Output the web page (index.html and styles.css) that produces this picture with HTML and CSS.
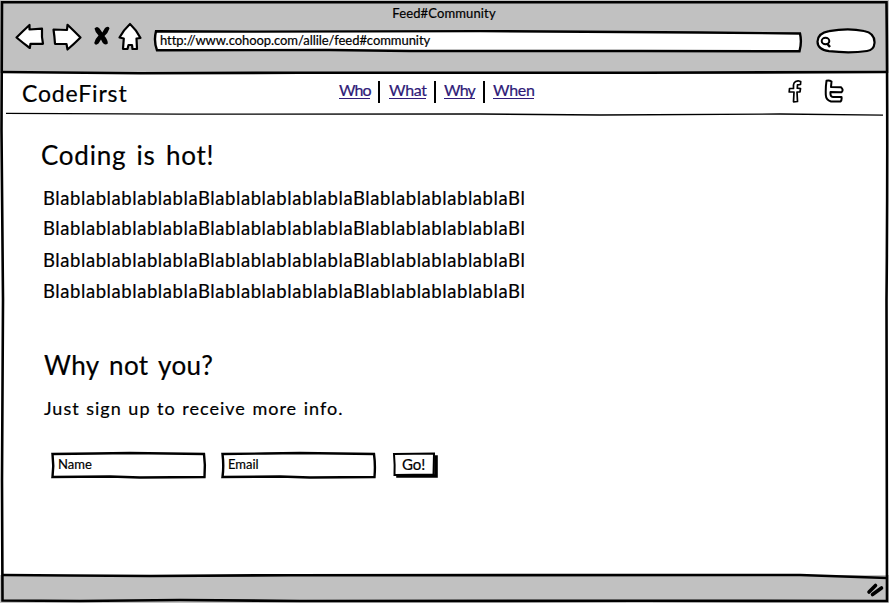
FILE: index.html
```html
<!DOCTYPE html>
<html lang="en">
<head>
<meta charset="utf-8">
<title>Feed#Community</title>
<link rel="stylesheet" href="styles.css">
</head>
<body>
<div class="window">
  <header class="chrome">
    <div class="title"><span>Feed#Community</span></div>
    <div class="toolbar">
      <svg class="controls" width="130" height="32" viewBox="14 22 130 32">
        <g fill="#fff" stroke="#000" stroke-width="2.2" stroke-linejoin="round">
          <path d="M16.5 37.5 Q23 31 29.5 25 L29.5 29.500 L42 28.700 Q41.500 37 43 43.800 L30.500 43.800 L29.800 48 Q23 43 16.500 37.500Z"/>
          <path d="M53.500 29.500 L67 30 L67.500 24.800 Q74 31 80.500 37.500 Q74 44 67.500 49.500 L66.500 44 L55 43.800 Q54.500 36 53.500 29.500Z"/>
          <path d="M130 24 Q124 29.500 119.500 37.500 L123.800 38.500 L123 48.800 L127.500 49 L128.500 45 L132 45 L132.500 49 L137 49 L136.500 38.500 L140.500 38 Q136.500 30 130 24Z"/>
        </g>
        <path d="M94.500 28.500 Q97 25.500 99.500 28.500 L102.300 32.500 L105 28 Q109 25.500 109.500 28.500 Q108 33 104.500 36 Q108 40 107.800 43.500 Q105 46 102.500 42.500 L101 39.500 L98.500 43.500 Q95.500 46 94.200 43 Q95 39 98.500 35.500 Q95 32 94.500 28.500Z"/>
      </svg>
      <div class="address">
        <svg class="sketch" width="650" height="24" viewBox="153 29 650 24"><path d="M156 31.300 L250 31.600 L480 31.100 L700 32.500 L800 33.500 Q802 42 799.500 51.300 L640 51 L410 51 L330 50 L157 50.200 Q153.500 41 156 31.300Z"/></svg>
        <span>http://www.cohoop.com/allile/feed#community</span>
      </div>
      <svg class="search" width="62" height="28" viewBox="815 27 62 28">
        <path d="M829 51.200 Q817.500 49.500 817.500 41.500 Q818 33 829 31.200 Q848 27.500 864 31 Q875 33 874.500 43 Q874 50 867 51 Q850 53.500 829 51.200Z" fill="#fff" stroke="#000" stroke-width="2.200"/>
        <ellipse cx="825.500" cy="41" rx="3.800" ry="3.200" fill="none" stroke="#000" stroke-width="2"/>
        <path d="M827 43.500 L830 47" stroke="#000" stroke-width="2.500"/>
      </svg>
    </div>
  </header>

  <div class="sitebar">
    <div class="brand"><span>CodeFirst</span></div>
    <nav class="nav">
      <a class="who" href="#">Who</a><a class="what" href="#">What</a><a class="why" href="#">Why</a><a class="when" href="#">When</a>
    </nav>
    <div class="social">
      <svg width="14" height="25" viewBox="788 79 14 25" fill="#fff" stroke="#000" stroke-width="1.700" stroke-linejoin="round"><path d="M793.500 101.800 L794 92 L789.200 92 L789.500 88.500 L793.500 88.500 Q792.500 81 798 80.800 L800.700 81.500 L800.500 84.500 L797.500 84.800 L797.300 88.200 L800.500 88.500 L800 91.800 L797 92 L797.500 101.500Z"/></svg>
      <svg width="22" height="25" viewBox="823 79 22 25" fill="#fff" stroke="#000" stroke-width="2" stroke-linejoin="round"><path d="M826.500 80.800 Q829 79.800 831.500 81.500 L831 87 L841 87.200 Q844 90 841.500 92.200 L830.500 92 Q830 97 833 97 L841.500 97 Q842 100 840.500 101.500 L831 101.500 Q826 100 825.800 95 Q825.500 87 826.500 80.800Z"/></svg>
    </div>
  </div>

  <main class="page">
    <h1><span>Coding is hot!</span></h1>
    <div class="copy">
      <p>BlablablablablablaBlablablablablablaBlablablablablablaBl</p>
      <p>BlablablablablablaBlablablablablablaBlablablablablablaBl</p>
      <p>BlablablablablablaBlablablablablablaBlablablablablablaBl</p>
      <p>BlablablablablablaBlablablablablablaBlablablablablablaBl</p>
    </div>
    <h2><span>Why not you?</span></h2>
    <p class="lead">Just sign up to receive more info.</p>
    <div class="signup">
      <div class="field">
        <svg class="sketch" width="158" height="29" viewBox="0 0 158 29"><path d="M2.500 3 L45 2.500 L80 2 L154 3 Q155.500 14 154.500 26 L90 26.500 L60 25.500 L2.500 26 Q4 15 2.500 3Z"/></svg>
        <span>Name</span>
      </div>
      <div class="field">
        <svg class="sketch" width="158" height="29" viewBox="0 0 158 29"><path d="M2.500 3 L45 2.500 L80 2 L154 3 Q155.500 14 154.500 26 L90 26.500 L60 25.500 L2.500 26 Q4 15 2.500 3Z"/></svg>
        <span>Email</span>
      </div>
      <div class="go">
        <svg class="sketch" width="48" height="29" viewBox="0 0 48 29"><path class="shade" d="M5 26 H45 V5 H43 V24 H5Z"/><path class="face" d="M2 3 L42 2.500 L41.500 23.500 L2.500 24 Q3 14 2 3Z"/></svg>
        <span>Go!</span>
      </div>
    </div>
  </main>

  <footer class="status">
    <svg width="20" height="16" viewBox="866 582 20 16"><path d="M869 592 L875.500 585.500 M872.500 594.500 L881.500 588" stroke="#000" stroke-width="3.600" stroke-linecap="round"/></svg>
  </footer>

  <svg class="frame" width="889" height="603" viewBox="0 0 889 603">
    <path d="M2 2.300 L886.500 2.300 Q888 140 886.500 300 L887 601 L640 600.800 L300 601 L180 600 L80 601 L2.500 600.500 L2 480 L3 300 L1.500 130Z"/>
    <path d="M2 72 L140 73.200 L300 72.800 L640 72.800 L887 72"/>
    <path d="M3 575 L70 575.500 L150 576 L290 575.200 L800 575 L887 578"/>
    <path class="thin" d="M6 113.300 L180 114.200 L480 114 L600 115 L780 114 L883 115.200"/>
  </svg>
</div>
</body>
</html>
```
FILE: styles.css
```css
* { box-sizing: border-box; }
body, h1, h2, p { margin: 0; font-weight: 400; }
body { background: #fff; color: #000; font-family: Lato, "Open Sans", sans-serif; overflow: hidden; -webkit-text-stroke: .2px currentColor; }
span, p, a { white-space: nowrap; }
svg { display: block; flex: none; }

.window { position: relative; width: 889px; height: 603px; display: flex; flex-direction: column; }
.frame { position: absolute; left: 0; top: 0; pointer-events: none; fill: none; stroke: #000; stroke-width: 2.6; }
.frame .thin { stroke-width: 1.3; }

.chrome { height: 73px; background: #c1c1c1; padding: 4px 12px 0 14px; }
.title { height: 18px; line-height: 19px; text-align: center; font-size: 13px; letter-spacing: .13px; padding-right: 3px; }
.toolbar { display: flex; align-items: flex-start; }
.address { position: relative; width: 650px; height: 24px; margin: 7px 12px 0 9px; padding-left: 7px; font-size: 13px; line-height: 23px; letter-spacing: -.06px; }
.address span, .field span, .go span { position: relative; }
.search { margin-top: 5px; }
.sketch { position: absolute; left: 0; top: 0; fill: #fff; stroke: #000; stroke-width: 2.4; }
.sketch .shade { fill: #000; stroke-width: 1.6; }
.sketch .face { stroke-width: 2; }

.sitebar { height: 42px; display: grid; grid-template-columns: 339px 1fr 101px; }
.brand { padding-left: 22px; font-size: 23px; line-height: 41px; letter-spacing: .85px; }
.nav { display: flex; padding-top: 8px; height: 31px; }
.nav a { color: #2e1a78; font-size: 16px; line-height: 18px; height: 18px; border-bottom: 1px solid #2e1a78; text-decoration: none; position: relative; margin-right: 18px; letter-spacing: -.3px; }
.nav a:not(:last-child)::after { content: ""; position: absolute; right: -10px; top: 0; width: 2px; height: 22px; background: #000; }
.nav .who { width: 31px; margin-right: 19px; letter-spacing: -1px; }
.nav .what { width: 37px; }
.nav .why { width: 31px; letter-spacing: -.8px; }
.nav .when { width: 41px; }
.social { display: flex; gap: 21px; padding-top: 6px; }

.page { flex: 1; padding: 22px 0 0 41px; }
h1, h2 { font-size: 26px; line-height: 36px; height: 36px; letter-spacing: .75px; word-spacing: 3px; }
.copy { display: grid; grid-template-rows: 30px 32px 31px 31px; padding: 10px 0 0 2px; font-size: 18.5px; line-height: 30px; letter-spacing: .57px; }
h2 { margin-top: 40px; padding-left: 3px; letter-spacing: .4px; }
.lead { padding-left: 3px; margin-top: 10px; font-size: 18px; line-height: 30px; letter-spacing: 1px; word-spacing: 1px; }
.signup { display: flex; padding: 28px 0 0 9px; gap: 12px; }
.field { position: relative; width: 158px; height: 29px; padding-left: 8px; font-size: 13px; line-height: 27px; }
.go { position: relative; width: 48px; height: 29px; margin-left: 2px; padding-left: 10px; font-size: 15px; line-height: 27px; }

.status { height: 28px; background: #c1c1c1; display: flex; justify-content: flex-end; padding: 7px 3px 0 0; }
```
